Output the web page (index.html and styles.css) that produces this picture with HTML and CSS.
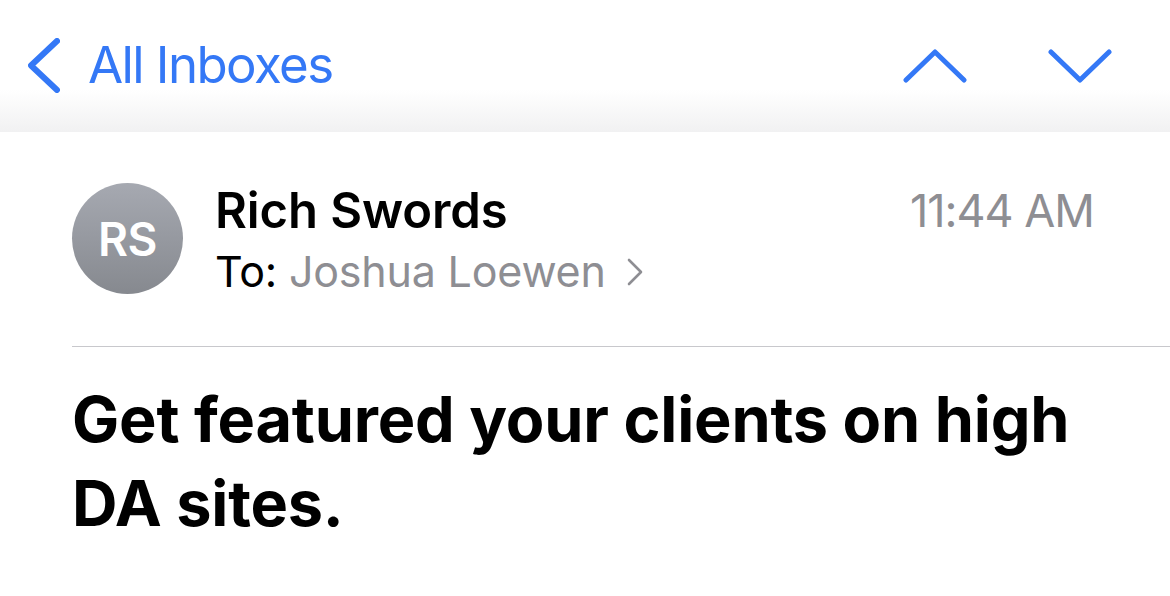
FILE: index.html
```html
<!DOCTYPE html>
<html lang="en">
<head>
<meta charset="utf-8">
<title>Mail</title>
<link rel="stylesheet" href="styles.css">
</head>
<body>
<header class="nav">
  <a class="back">
    <svg class="back-icon" width="32" height="55" viewBox="0 0 32 55" aria-hidden="true">
      <polyline points="29,3 3,27.5 29,52" fill="none" stroke="#3478f6" stroke-width="6" stroke-linecap="round" stroke-linejoin="round"/>
    </svg>
    <span class="back-label">All Inboxes</span>
  </a>
  <div class="arrows">
    <svg class="arrow" width="64" height="34" viewBox="0 0 64 34" aria-hidden="true">
      <polyline points="3,31 32,3 61,31" fill="none" stroke="#3478f6" stroke-width="5" stroke-linecap="round" stroke-linejoin="round"/>
    </svg>
    <svg class="arrow" width="64" height="34" viewBox="0 0 64 34" aria-hidden="true">
      <polyline points="3,3 32,31 61,3" fill="none" stroke="#3478f6" stroke-width="5" stroke-linecap="round" stroke-linejoin="round"/>
    </svg>
  </div>
</header>
<main class="message">
  <section class="sender">
    <div class="avatar">RS</div>
    <div class="sender-info">
      <div class="sender-name">Rich Swords</div>
      <div class="recipients">To: <span class="recipient">Joshua Loewen</span><svg class="chev" width="20" height="30" viewBox="0 0 20 30" aria-hidden="true"><polyline points="4,3 16,15 4,27" fill="none" stroke="#8e8e93" stroke-width="2.6" stroke-linecap="round" stroke-linejoin="round"/></svg></div>
    </div>
    <div class="time">11:44 AM</div>
  </section>
  <h1 class="subject">Get featured your clients on high DA sites.</h1>
</main>
</body>
</html>
```
FILE: styles.css
```css
html, body {
  margin: 0;
  padding: 0;
  background: #ffffff;
}
body {
  font-family: Inter, "Noto Sans", "Liberation Sans", sans-serif;
  color: #000;
  width: 1170px;
  height: 596px;
  overflow: hidden;
}
.nav {
  height: 132px;
  display: flex;
  align-items: center;
  justify-content: space-between;
  background: linear-gradient(to bottom, #ffffff 0%, #ffffff 68%, #f1f1f2 100%);
  padding: 0 58px 2px 28px;
  box-sizing: border-box;
}
.back {
  display: flex;
  align-items: center;
  gap: 28px;
  color: #3478f6;
}
.back-icon {
  display: block;
  margin-top: 1px;
}
.back-label {
  font-size: 51px;
  line-height: 60px;
  font-weight: 400;
  letter-spacing: -1.6px;
}
.arrows {
  display: flex;
  gap: 81px;
  margin-top: 1px;
}
.arrow {
  display: block;
}
.message {
  padding: 51px 0 0 72px;
}
.sender {
  display: flex;
  align-items: flex-start;
  padding-right: 76px;
}
.avatar {
  width: 111px;
  height: 111px;
  border-radius: 50%;
  background: linear-gradient(to bottom, #a6a9b1 0%, #86898f 100%);
  color: #fff;
  font-size: 46px;
  font-weight: 600;
  letter-spacing: -0.5px;
  display: flex;
  align-items: center;
  justify-content: center;
  flex-shrink: 0;
}
.sender-info {
  flex: 1;
  margin-left: 32px;
}
.sender-name {
  font-size: 49px;
  font-weight: 600;
  line-height: 56px;
  letter-spacing: -0.1px;
}
.recipients {
  margin-top: 6px;
  font-size: 43px;
  line-height: 52px;
  color: #000;
  letter-spacing: -0.2px;
  display: flex;
  align-items: center;
  white-space: pre;
}
.recipient {
  color: #8e8e93;
}
.chev {
  display: block;
  margin-left: 19px;
  margin-top: 2px;
}
.time {
  font-size: 45px;
  line-height: 56px;
  color: #8e8e93;
  letter-spacing: -1px;
}
.subject {
  margin: 49px 0 0 0;
  border-top: 1px solid #c8c8cc;
  padding: 30px 60px 0 0;
  font-size: 63px;
  line-height: 84px;
  font-weight: 700;
  letter-spacing: -0.2px;
}
```
